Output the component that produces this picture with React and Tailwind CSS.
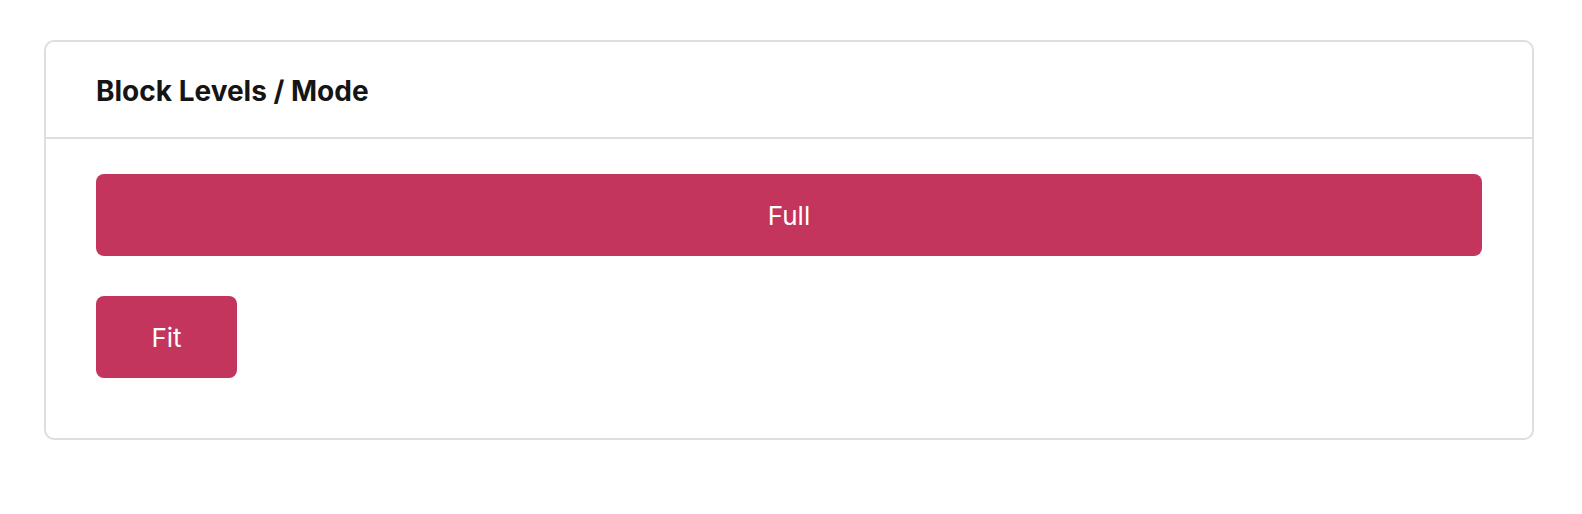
export default function App() {
  return (
    <div className="min-h-screen bg-white pt-[40px] pl-[44px] pr-[48px]" style={{ fontFamily: "Inter, 'Liberation Sans', sans-serif" }}>
      <div className="rounded-[10px] border-2 border-[#dedede] bg-white">
        <div className="flex h-[97px] items-center border-b-2 border-[#dedede] px-[50px]">
          <h2 className="pt-[3px] text-[28px] font-bold text-[#151515]">Block Levels / Mode</h2>
        </div>
        <div className="flex flex-col items-start gap-[40px] px-[50px] pt-[35px] pb-[60px]">
          <button className="flex h-[82px] w-full items-center justify-center rounded-[8px] bg-[#c4355d] text-[26px] text-white">
            Full
          </button>
          <button className="flex h-[82px] w-[141px] items-center justify-center rounded-[8px] bg-[#c4355d] text-[26px] text-white">
            Fit
          </button>
        </div>
      </div>
    </div>
  );
}
